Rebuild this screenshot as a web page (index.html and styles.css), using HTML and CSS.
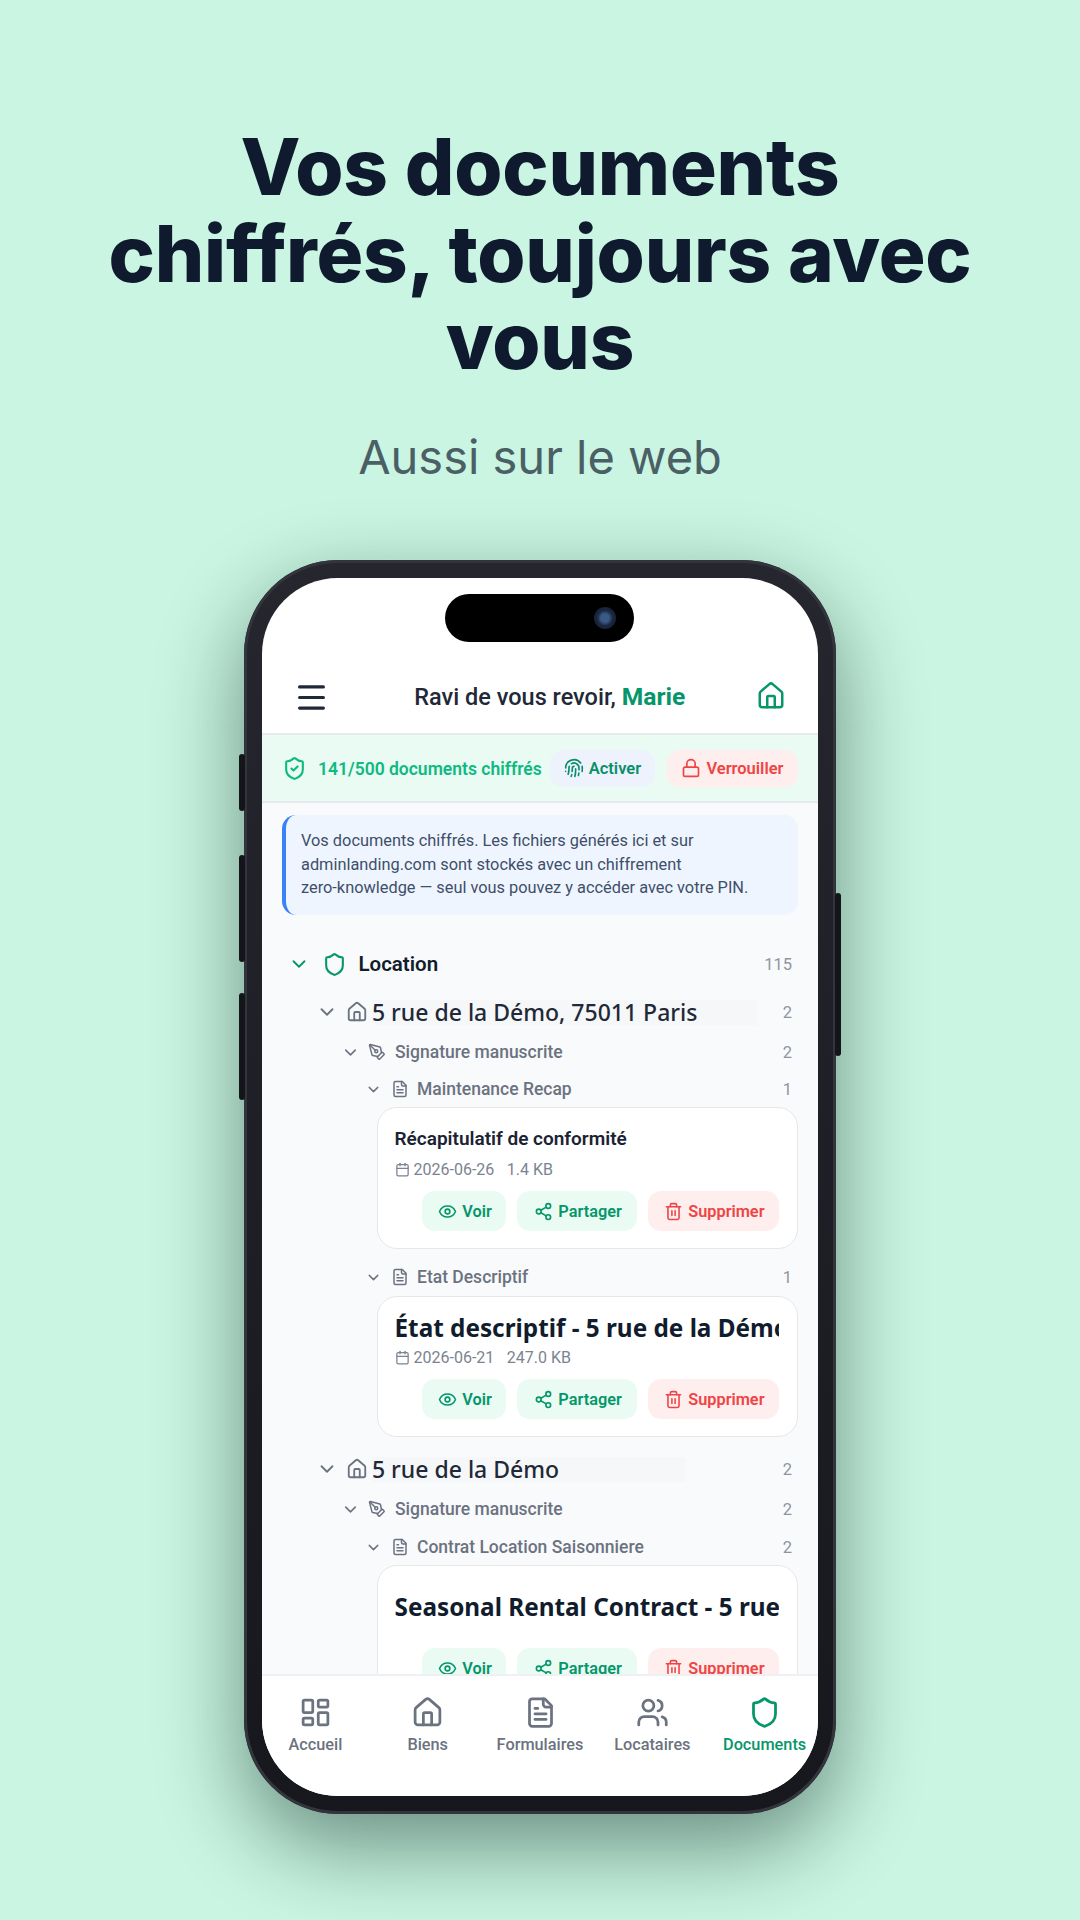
FILE: index.html
```html
<!DOCTYPE html>
<html lang="fr">
<head>
    <meta charset="UTF-8">
    <meta name="viewport" content="width=device-width, initial-scale=1.0">
    <title>Vos documents chiffrés</title>
    <link rel="stylesheet" href="styles.css">
</head>
<body>

    <svg class="sprite" xmlns="http://www.w3.org/2000/svg">
        <symbol id="i-menu" viewBox="0 0 24 24"><path d="M5 5.8h14M5 12h14M5 18.2h14"/></symbol>
        <symbol id="i-home" viewBox="0 0 24 24"><path d="M15 21v-8a1 1 0 0 0-1-1h-4a1 1 0 0 0-1 1v8"/><path d="M3 10a2 2 0 0 1 .709-1.528l7-5.999a2 2 0 0 1 2.582 0l7 5.999A2 2 0 0 1 21 10v9a2 2 0 0 1-2 2H5a2 2 0 0 1-2-2z"/></symbol>
        <symbol id="i-shield" viewBox="0 0 24 24"><path d="M20 13c0 5-3.5 7.5-7.66 8.95a1 1 0 0 1-.67-.01C7.5 20.5 4 18 4 13V6a1 1 0 0 1 1-1c2 0 4.5-1.2 6.24-2.72a1.17 1.17 0 0 1 1.52 0C14.51 3.81 17 5 19 5a1 1 0 0 1 1 1z"/></symbol>
        <symbol id="i-shield-check" viewBox="0 0 24 24"><path d="M20 13c0 5-3.5 7.5-7.66 8.95a1 1 0 0 1-.67-.01C7.5 20.5 4 18 4 13V6a1 1 0 0 1 1-1c2 0 4.5-1.2 6.24-2.72a1.17 1.17 0 0 1 1.52 0C14.51 3.81 17 5 19 5a1 1 0 0 1 1 1z"/><path d="m9 12 2 2 4-4"/></symbol>
        <symbol id="i-finger" viewBox="0 0 24 24"><path d="M12 10a2 2 0 0 0-2 2c0 1.02-.1 2.51-.26 4"/><path d="M14 13.12c0 2.38 0 6.38-1 8.88"/><path d="M17.29 21.02c.12-.6.43-2.3.5-3.02"/><path d="M2 12a10 10 0 0 1 18-6"/><path d="M2 16h.01"/><path d="M21.8 16c.2-2 .131-5.354 0-6"/><path d="M5 19.5C5.5 18 6 15 6 12a6 6 0 0 1 .34-2"/><path d="M8.65 22c.21-.66.45-1.32.57-2"/><path d="M9 6.8a6 6 0 0 1 9 5.2v2"/></symbol>
        <symbol id="i-lock" viewBox="0 0 24 24"><rect x="3" y="11" width="18" height="11" rx="2"/><path d="M7 11V7a5 5 0 0 1 10 0v4"/></symbol>
        <symbol id="i-chevron" viewBox="0 0 24 24"><path d="m6 9 6 6 6-6"/></symbol>
        <symbol id="i-pen" viewBox="0 0 24 24"><path d="M15.707 21.293a1 1 0 0 1-1.414 0l-1.586-1.586a1 1 0 0 1 0-1.414l5.586-5.586a1 1 0 0 1 1.414 0l1.586 1.586a1 1 0 0 1 0 1.414z"/><path d="m18 13-1.375-6.874a1 1 0 0 0-.746-.776L3.235 2.028a1 1 0 0 0-1.207 1.207L5.35 15.879a1 1 0 0 0 .776.746L13 18"/><path d="m2.3 2.3 7.286 7.286"/><circle cx="11" cy="11" r="2"/></symbol>
        <symbol id="i-doc" viewBox="0 0 24 24"><path d="M15 2H6a2 2 0 0 0-2 2v16a2 2 0 0 0 2 2h12a2 2 0 0 0 2-2V7Z"/><path d="M14 2v4a2 2 0 0 0 2 2h4"/><path d="M10 9H8"/><path d="M16 13H8"/><path d="M16 17H8"/></symbol>
        <symbol id="i-calendar" viewBox="0 0 24 24"><path d="M8 2v4"/><path d="M16 2v4"/><rect x="3" y="4" width="18" height="18" rx="2"/><path d="M3 10h18"/></symbol>
        <symbol id="i-eye" viewBox="0 0 24 24"><path d="M2.062 12.348a1 1 0 0 1 0-.696 10.75 10.75 0 0 1 19.876 0 1 1 0 0 1 0 .696 10.75 10.75 0 0 1-19.876 0"/><circle cx="12" cy="12" r="3"/></symbol>
        <symbol id="i-share" viewBox="0 0 24 24"><circle cx="18" cy="5" r="3"/><circle cx="6" cy="12" r="3"/><circle cx="18" cy="19" r="3"/><path d="m8.59 13.51 6.83 3.98"/><path d="m15.41 6.51-6.82 3.98"/></symbol>
        <symbol id="i-trash" viewBox="0 0 24 24"><path d="M3 6h18"/><path d="M19 6v14c0 1-1 2-2 2H7c-1 0-2-1-2-2V6"/><path d="M8 6V4c0-1 1-2 2-2h4c1 0 2 1 2 2v2"/><path d="M10 11v6"/><path d="M14 11v6"/></symbol>
        <symbol id="i-grid" viewBox="0 0 24 24"><rect x="3" y="3" width="7" height="9" rx="1"/><rect x="14" y="3" width="7" height="5" rx="1"/><rect x="14" y="12" width="7" height="9" rx="1"/><rect x="3" y="16" width="7" height="5" rx="1"/></symbol>
        <symbol id="i-users" viewBox="0 0 24 24"><path d="M16 21v-2a4 4 0 0 0-4-4H6a4 4 0 0 0-4 4v2"/><circle cx="9" cy="7" r="4"/><path d="M22 21v-2a4 4 0 0 0-3-3.87"/><path d="M16 3.13a4 4 0 0 1 0 7.75"/></symbol>
    </svg>

    <header class="hero">
        <h1>Vos documents<br>chiffrés, toujours avec<br>vous</h1>
        <p class="hero-sub">Aussi sur le web</p>
    </header>

    <div class="phone">
        <span class="side-btn side-mute"></span>
        <span class="side-btn side-up"></span>
        <span class="side-btn side-down"></span>
        <span class="side-btn side-power"></span>

        <div class="screen">
            <div class="island"><span class="camera"></span></div>

            <div class="topbar">
                <svg class="ic ic-menu"><use href="#i-menu"/></svg>
                <div class="greeting">Ravi de vous revoir, <strong>Marie</strong></div>
                <svg class="ic ic-tophome"><use href="#i-home"/></svg>
            </div>

            <div class="vault">
                <svg class="ic ic-vault"><use href="#i-shield-check"/></svg>
                <span class="vault-count">141/500 documents chiffrés</span>
                <span class="pill pill-blue"><svg class="ic"><use href="#i-finger"/></svg>Activer</span>
                <span class="pill pill-red"><svg class="ic"><use href="#i-lock"/></svg>Verrouiller</span>
            </div>

            <main class="content">
                <div class="info">Vos documents chiffrés. Les fichiers générés ici et sur<br>adminlanding.com sont stockés avec un chiffrement<br>zero-knowledge — seul vous pouvez y accéder avec votre PIN.</div>

                <div class="row l0">
                    <svg class="ic chev"><use href="#i-chevron"/></svg>
                    <svg class="ic kind"><use href="#i-shield"/></svg>
                    <span class="name">Location</span>
                    <span class="count">115</span>
                </div>

                <div class="row l1">
                    <svg class="ic chev"><use href="#i-chevron"/></svg>
                    <svg class="ic kind"><use href="#i-home"/></svg>
                    <span class="name addr-long">5 rue de la Démo, 75011 Paris</span>
                    <span class="count">2</span>
                </div>
                <div class="row l2">
                    <svg class="ic chev"><use href="#i-chevron"/></svg>
                    <svg class="ic kind"><use href="#i-pen"/></svg>
                    <span class="name">Signature manuscrite</span>
                    <span class="count">2</span>
                </div>
                <div class="row l3">
                    <svg class="ic chev"><use href="#i-chevron"/></svg>
                    <svg class="ic kind"><use href="#i-doc"/></svg>
                    <span class="name">Maintenance Recap</span>
                    <span class="count">1</span>
                </div>
                <article class="card">
                    <div class="card-title">Récapitulatif de conformité</div>
                    <div class="meta">
                        <svg class="ic"><use href="#i-calendar"/></svg>
                        <span>2026-06-26</span>
                        <span class="meta-size">1.4 KB</span>
                    </div>
                    <div class="actions">
                        <span class="act act-green"><svg class="ic"><use href="#i-eye"/></svg>Voir</span>
                        <span class="act act-green act-share"><svg class="ic"><use href="#i-share"/></svg>Partager</span>
                        <span class="act act-red"><svg class="ic"><use href="#i-trash"/></svg>Supprimer</span>
                    </div>
                </article>

                <div class="row l3">
                    <svg class="ic chev"><use href="#i-chevron"/></svg>
                    <svg class="ic kind"><use href="#i-doc"/></svg>
                    <span class="name">Etat Descriptif</span>
                    <span class="count">1</span>
                </div>
                <article class="card card-big">
                    <div class="card-title">État descriptif - 5 rue de la Démo</div>
                    <div class="meta">
                        <svg class="ic"><use href="#i-calendar"/></svg>
                        <span>2026-06-21</span>
                        <span class="meta-size">247.0 KB</span>
                    </div>
                    <div class="actions">
                        <span class="act act-green"><svg class="ic"><use href="#i-eye"/></svg>Voir</span>
                        <span class="act act-green act-share"><svg class="ic"><use href="#i-share"/></svg>Partager</span>
                        <span class="act act-red"><svg class="ic"><use href="#i-trash"/></svg>Supprimer</span>
                    </div>
                </article>

                <div class="row l1 l1-tall">
                    <svg class="ic chev"><use href="#i-chevron"/></svg>
                    <svg class="ic kind"><use href="#i-home"/></svg>
                    <span class="name addr-short">5 rue de la Démo</span>
                    <span class="count">2</span>
                </div>
                <div class="row l2">
                    <svg class="ic chev"><use href="#i-chevron"/></svg>
                    <svg class="ic kind"><use href="#i-pen"/></svg>
                    <span class="name">Signature manuscrite</span>
                    <span class="count">2</span>
                </div>
                <div class="row l3">
                    <svg class="ic chev"><use href="#i-chevron"/></svg>
                    <svg class="ic kind"><use href="#i-doc"/></svg>
                    <span class="name">Contrat Location Saisonniere</span>
                    <span class="count">2</span>
                </div>
                <article class="card card-big card-nometa">
                    <div class="card-title">Seasonal Rental Contract - 5 rue</div>
                    <div class="actions">
                        <span class="act act-green"><svg class="ic"><use href="#i-eye"/></svg>Voir</span>
                        <span class="act act-green act-share"><svg class="ic"><use href="#i-share"/></svg>Partager</span>
                        <span class="act act-red"><svg class="ic"><use href="#i-trash"/></svg>Supprimer</span>
                    </div>
                </article>
            </main>

            <nav class="tabs">
                <div class="tab"><svg class="ic"><use href="#i-grid"/></svg>Accueil</div>
                <div class="tab"><svg class="ic"><use href="#i-home"/></svg>Biens</div>
                <div class="tab"><svg class="ic"><use href="#i-doc"/></svg>Formulaires</div>
                <div class="tab"><svg class="ic"><use href="#i-users"/></svg>Locataires</div>
                <div class="tab tab-on"><svg class="ic"><use href="#i-shield"/></svg>Documents</div>
            </nav>
        </div>
    </div>

</body>
</html>
```
FILE: styles.css
```css
* {
    box-sizing: border-box;
}
body {
    margin: 0;
    width: 1080px;
    height: 1920px;
    overflow: hidden;
    background-color: #c9f5e2;
    font-family: Roboto, "Liberation Sans", sans-serif;
}
.sprite {
    display: none;
}
.ic {
    fill: none;
    stroke: currentColor;
    stroke-width: 2;
    stroke-linecap: round;
    stroke-linejoin: round;
    flex: none;
}

/* hero */
.hero {
    height: 560px;
    padding-top: 123px;
    text-align: center;
}
.hero h1 {
    margin: 0;
    font-family: Inter, sans-serif;
    font-size: 78px;
    font-weight: 800;
    line-height: 87px;
    letter-spacing: -0.2px;
    white-space: nowrap;
    color: #0f1a2e;
}
.hero-sub {
    margin: 44px 0 0;
    font-family: Inter, sans-serif;
    font-size: 47px;
    line-height: 58px;
    color: #4b6064;
}

/* phone */
.phone {
    position: relative;
    width: 592px;
    height: 1254px;
    margin: 0 auto;
    padding: 18px;
    border-radius: 94px;
    background: linear-gradient(#25262e, #17181d);
    box-shadow: inset 0 0 0 3px #33343c, 0 32px 85px rgba(0, 30, 20, 0.48);
}
.side-btn {
    position: absolute;
    width: 6px;
    background-color: #14151a;
    border-radius: 3px;
}
.side-mute { left: -5px; top: 194px; height: 57px; }
.side-up { left: -5px; top: 295px; height: 107px; }
.side-down { left: -5px; top: 433px; height: 107px; }
.side-power { right: -5px; top: 333px; height: 163px; }
.screen {
    position: relative;
    height: 100%;
    display: flex;
    flex-direction: column;
    overflow: hidden;
    border-radius: 76px;
    background-color: #fff;
}
.island {
    position: absolute;
    left: 183px;
    top: 16px;
    width: 189px;
    height: 48px;
    border-radius: 24px;
    background-color: #000;
}
.camera {
    position: absolute;
    right: 18px;
    top: 13px;
    width: 22px;
    height: 22px;
    border-radius: 50%;
    background: radial-gradient(circle, #3a5a85 0 26%, #1a2740 50%, #141c2e 100%);
}

/* top bar */
.topbar {
    flex: none;
    height: 157px;
    padding: 94px 31.5px 11px 29px;
    display: flex;
    align-items: center;
    justify-content: space-between;
    border-bottom: 2px solid #e8ebee;
}
.ic-menu {
    width: 41px;
    height: 41px;
    stroke-width: 1.8;
    color: #1f2937;
}
.greeting {
    margin: 0 0 2px 11px;
    font-size: 23.5px;
    font-weight: 500;
    color: #1f2937;
}
.greeting strong {
    font-size: 24.6px;
    font-weight: 700;
    color: #059669;
}
.ic-tophome {
    width: 30px;
    height: 30px;
    margin-bottom: 2px;
    color: #059669;
}

/* vault strip */
.vault {
    flex: none;
    height: 68px;
    padding: 0 20px;
    display: flex;
    align-items: center;
    background-color: #e9fbf3;
    border-bottom: 2px solid #e6eaee;
}
.ic-vault {
    width: 25px;
    height: 25px;
    margin-right: 11px;
    color: #10b981;
}
.vault-count {
    margin-top: 2px;
    font-size: 17.5px;
    font-weight: 600;
    color: #10b981;
    white-space: nowrap;
}
.pill {
    height: 37px;
    padding-left: 14px;
    display: flex;
    align-items: center;
    gap: 5px;
    border-radius: 13px;
    font-size: 16.5px;
    font-weight: 600;
}
.pill .ic {
    width: 20px;
    height: 20px;
}
.pill-blue {
    width: 106px;
    margin-left: 8px;
    background-color: #eef2fd;
    color: #0b8f6a;
}
.pill-red {
    width: 131px;
    margin-left: 12px;
    background-color: #ffeeee;
    color: #ef4444;
}

/* scroll area */
.content {
    flex: 1;
    min-height: 0;
    overflow: hidden;
    padding: 12px 20px 0;
    background-color: #f9fafc;
}
.info {
    height: 100px;
    padding: 14px 0 0 15px;
    border-left: 4px solid #3b82f6;
    border-radius: 14px;
    background-color: #eff5fe;
    font-size: 16.35px;
    line-height: 23.5px;
    color: #3e4f6a;
    white-space: nowrap;
}

/* tree */
.row {
    display: flex;
    align-items: center;
    padding-right: 6px;
}
.name {
    flex: none;
    white-space: nowrap;
}
.count {
    margin-left: auto;
    font-size: 16.5px;
    color: #8d95a1;
}
.l0 {
    height: 34px;
    margin-top: 32px;
    padding-left: 6.4px;
    color: #111c2d;
}
.l0 .chev {
    width: 22px;
    height: 22px;
    color: #059669;
}
.l0 .kind {
    width: 25px;
    height: 25px;
    margin: 0 11.6px 0 11.5px;
    color: #059669;
}
.l0 .name {
    font-size: 20.5px;
    font-weight: 600;
}
.l1 {
    height: 30px;
    margin-top: 16px;
    padding-left: 34.4px;
}
.l1-tall {
    margin-bottom: 3px;
}
.l1 .chev {
    width: 22px;
    height: 22px;
    color: #6b7280;
}
.l1 .kind {
    width: 22px;
    height: 22px;
    margin: 0 3.8px 0 7.8px;
    color: #6b7280;
}
.l1 .name {
    height: 25px;
    font-family: "Noto Sans", sans-serif;
    font-size: 23px;
    font-weight: 500;
    line-height: 25px;
    color: #1f2937;
    background-color: #f6f7f9;
}
.addr-long { width: 386px; }
.addr-short { width: 314px; }
.l2 {
    height: 24px;
    margin-top: 13px;
    padding-left: 59px;
    color: #6b7280;
}
.l2 .chev {
    width: 19px;
    height: 19px;
}
.l2 .kind {
    width: 18px;
    height: 18px;
    margin: 0 9px 0 8px;
}
.l3 {
    height: 24px;
    margin-top: 13px;
    padding-left: 82.5px;
    color: #6b7280;
}
.l1-tall ~ .l3 {
    margin-top: 14px;
}
.l3 .chev {
    width: 17px;
    height: 17px;
}
.l3 .kind {
    width: 18px;
    height: 18px;
    margin: 0 8.5px 0 9px;
}
.l2 .name,
.l3 .name {
    font-size: 17.5px;
    font-weight: 500;
}

/* cards */
.card {
    margin: 6px 0 16px 95px;
    padding: 19px 18px 17px 16.5px;
    border: 1.5px solid #e5e7eb;
    border-radius: 20px;
    background-color: #fff;
}
.card-title {
    overflow: hidden;
    white-space: nowrap;
    font-size: 19px;
    font-weight: 600;
    line-height: 24px;
    color: #1a2333;
}
.card-big {
    margin-top: 7px;
    margin-bottom: 17px;
    padding-top: 13px;
}
.card-big .card-title {
    font-family: "Noto Sans", sans-serif;
    font-size: 24.3px;
    font-weight: 700;
    line-height: 36px;
    color: #111c2d;
}
.card-big .meta {
    margin-top: 1px;
}
.card-nometa {
    margin-top: 6px;
    padding-top: 23px;
}
.card-nometa .actions {
    margin-top: 23px;
}
.meta {
    height: 20px;
    margin-top: 8px;
    display: flex;
    align-items: center;
    font-size: 16px;
    color: #7b8391;
}
.meta .ic {
    width: 15px;
    height: 15px;
    margin-right: 4px;
}
.meta-size {
    margin-left: 12.5px;
}
.actions {
    margin-top: 12px;
    display: flex;
    justify-content: flex-end;
    gap: 11px;
}
.act {
    height: 40px;
    padding: 0 14.5px 0 15.5px;
    display: flex;
    align-items: center;
    gap: 5.5px;
    border-radius: 13px;
    font-size: 16.3px;
    font-weight: 600;
}
.act-share {
    padding: 0 15.5px 0 16.5px;
}
.act .ic {
    width: 19px;
    height: 19px;
}
.act-green {
    background-color: #e9fbf3;
    color: #059669;
}
.act-red {
    background-color: #ffeeee;
    color: #ef4444;
}

/* bottom tabs */
.tabs {
    flex: none;
    height: 122px;
    padding-top: 19.5px;
    display: grid;
    grid-template-columns: repeat(5, 112.3px);
    justify-content: center;
    align-content: start;
    border-top: 2px solid #eef0f3;
    background-color: #fff;
}
.tab {
    display: flex;
    flex-direction: column;
    align-items: center;
    font-size: 16.3px;
    font-weight: 500;
    line-height: 20px;
    color: #6b7280;
    white-space: nowrap;
}
.tab .ic {
    width: 33px;
    height: 33px;
    margin-bottom: 6.5px;
}
.tab-on {
    color: #059669;
}
```
